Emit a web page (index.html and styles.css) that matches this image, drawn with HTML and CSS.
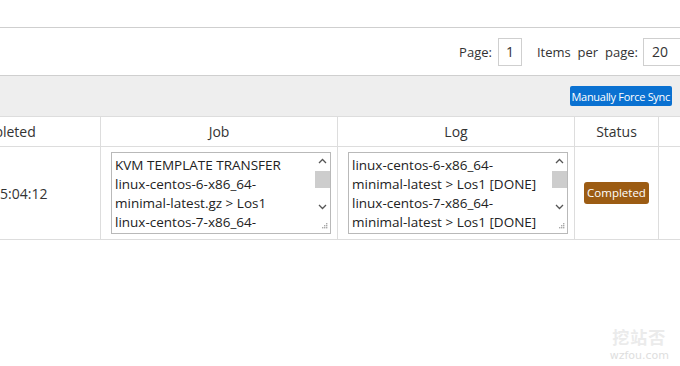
FILE: index.html
```html
<!DOCTYPE html>
<html lang="en">
<head>
  <meta charset="UTF-8" />
  <title>Template Sync Jobs</title>
  <link rel="stylesheet" href="styles.css">
</head>
<body>

  <div class="topbar"></div>

  <div class="pager">
    <span class="pager-label">Page:</span>
    <span class="pager-box">1</span>
    <span class="pager-label items">Items per page:</span>
    <span class="pager-box wide">20</span>
  </div>

  <div class="toolbar">
    <button class="btn-sync">Manually Force Sync</button>
  </div>

  <table class="jobs">
    <colgroup>
      <col class="c-date">
      <col class="c-job">
      <col class="c-log">
      <col class="c-status">
      <col class="c-more">
    </colgroup>
    <thead>
      <tr>
        <th>Completed</th>
        <th>Job</th>
        <th>Log</th>
        <th>Status</th>
        <th></th>
      </tr>
    </thead>
    <tbody>
      <tr>
        <td class="date">15:04:12</td>
        <td class="box-cell">
          <div class="textbox">
            <div class="textbox-text">KVM TEMPLATE TRANSFER<br>linux-centos-6-x86_64-<br>minimal-latest.gz &gt; Los1<br>linux-centos-7-x86_64-<br>minimal-latest.gz &gt; Los1</div>
            <div class="scroll">
              <svg class="arrow" width="9" height="6" viewBox="0 0 9 6"><path d="M1 5 L4.5 1.5 L8 5" fill="none" stroke="#555" stroke-width="1.3"/></svg>
              <div class="thumb"></div>
              <svg class="arrow down" width="9" height="6" viewBox="0 0 9 6"><path d="M1 1 L4.5 4.5 L8 1" fill="none" stroke="#555" stroke-width="1.3"/></svg>
              <svg class="grip" width="7" height="7" viewBox="0 0 7 7"><g fill="#aaa"><rect x="5" y="1" width="1.4" height="1.4"/><rect x="3" y="3" width="1.4" height="1.4"/><rect x="5" y="3" width="1.4" height="1.4"/><rect x="1" y="5" width="1.4" height="1.4"/><rect x="3" y="5" width="1.4" height="1.4"/><rect x="5" y="5" width="1.4" height="1.4"/></g></svg>
            </div>
          </div>
        </td>
        <td class="box-cell">
          <div class="textbox">
            <div class="textbox-text">linux-centos-6-x86_64-<br>minimal-latest &gt; Los1 [DONE]<br>linux-centos-7-x86_64-<br>minimal-latest &gt; Los1 [DONE]</div>
            <div class="scroll">
              <svg class="arrow" width="9" height="6" viewBox="0 0 9 6"><path d="M1 5 L4.5 1.5 L8 5" fill="none" stroke="#555" stroke-width="1.3"/></svg>
              <div class="thumb"></div>
              <svg class="arrow down" width="9" height="6" viewBox="0 0 9 6"><path d="M1 1 L4.5 4.5 L8 1" fill="none" stroke="#555" stroke-width="1.3"/></svg>
              <svg class="grip" width="7" height="7" viewBox="0 0 7 7"><g fill="#aaa"><rect x="5" y="1" width="1.4" height="1.4"/><rect x="3" y="3" width="1.4" height="1.4"/><rect x="5" y="3" width="1.4" height="1.4"/><rect x="1" y="5" width="1.4" height="1.4"/><rect x="3" y="5" width="1.4" height="1.4"/><rect x="5" y="5" width="1.4" height="1.4"/></g></svg>
            </div>
          </div>
        </td>
        <td class="status"><span class="badge">Completed</span></td>
        <td></td>
      </tr>
    </tbody>
  </table>

  <div class="watermark">
    <div class="wm-cn">挖站否</div>
    <div class="wm-en">wzfou.com</div>
  </div>

</body>
</html>
```

FILE: styles.css
```css
html, body {
  overflow: hidden;
}

body {
  margin: 0;
  font-family: "Open Sans", "Noto Sans", sans-serif;
  font-size: 13px;
  color: #333;
  background: #fff;
  height: 366px;
  position: relative;
}

.topbar {
  height: 27px;
  border-bottom: 1px solid #cfcfcf;
}

.pager {
  height: 47px;
  display: flex;
  align-items: center;
  justify-content: flex-end;
  margin-right: -41px;
}

.pager-label {
  margin-right: 6px;
}

.pager-label.items {
  margin-left: 15px;
  margin-right: 5px;
  word-spacing: 3.5px;
}

.pager-box {
  display: inline-block;
  width: 22px;
  height: 26px;
  line-height: 26px;
  text-align: center;
  border: 1px solid #cfcfcf;
  font-size: 14px;
}

.pager-box.wide {
  text-align: left;
  padding-left: 8px;
  box-sizing: border-box;
  width: 78px;
  height: 28px;
}

.toolbar {
  height: 40px;
  background: #eeeeee;
  border-top: 1px solid #cfcfcf;
  display: flex;
  align-items: center;
  justify-content: flex-end;
  padding-right: 8px;
}

.btn-sync {
  height: 20px;
  padding: 0 2px;
  background: #0a71d1;
  color: #fff;
  border: none;
  border-radius: 2px;
  font-family: "Open Sans", sans-serif;
  font-size: 11px;
  letter-spacing: -0.3px;
}

.jobs {
  border-collapse: collapse;
  table-layout: fixed;
  width: 880px;
  margin-left: -101px;
}

.c-date { width: 201px; }
.c-job { width: 237px; }
.c-log { width: 237px; }
.c-status { width: 84px; }
.c-more { width: 121px; }

.jobs th,
.jobs td {
  border: 1px solid #dddddd;
  padding: 0;
}

.jobs th {
  height: 29px;
  font-weight: normal;
  font-size: 14px;
  text-align: center;
}

.jobs td {
  height: 92px;
  text-align: center;
  vertical-align: middle;
}

.jobs td.date {
  font-size: 14px;
  text-align: left;
  padding-left: 92px;
}

.jobs td.box-cell {
  text-align: left;
  padding-left: 10px;
}

.textbox {
  width: 220px;
  height: 82px;
  box-sizing: border-box;
  border: 1px solid #b9b9b9;
  display: flex;
  background: #fff;
}

.textbox-text {
  flex: 1;
  overflow: hidden;
  white-space: nowrap;
  padding: 3px 0 0 3px;
  font-size: 13.5px;
  line-height: 19px;
  color: #222;
}

.scroll {
  width: 16px;
  display: flex;
  flex-direction: column;
  align-items: center;
  padding-top: 5px;
}

.arrow {
  display: block;
}

.thumb {
  width: 15px;
  height: 17px;
  background: #cdcdcd;
  margin-top: 7px;
}

.arrow.down {
  margin-top: 16px;
}

.grip {
  display: block;
  margin-top: 12px;
  margin-left: 4px;
}

.badge {
  display: inline-block;
  background: #9c5c13;
  color: #fff;
  font-size: 11.5px;
  line-height: 22px;
  padding: 0 3px;
  border-radius: 3px;
}

.watermark {
  position: absolute;
  right: 11px;
  bottom: 3px;
  text-align: center;
  color: #ebebeb;
}

.wm-cn {
  font-family: "Noto Sans CJK SC", sans-serif;
  font-size: 17px;
  font-weight: bold;
  letter-spacing: 1px;
  line-height: 24px;
}

.wm-en {
  font-family: "DejaVu Sans", sans-serif;
  font-size: 11px;
  color: #dedede;
  line-height: 14px;
}
```
